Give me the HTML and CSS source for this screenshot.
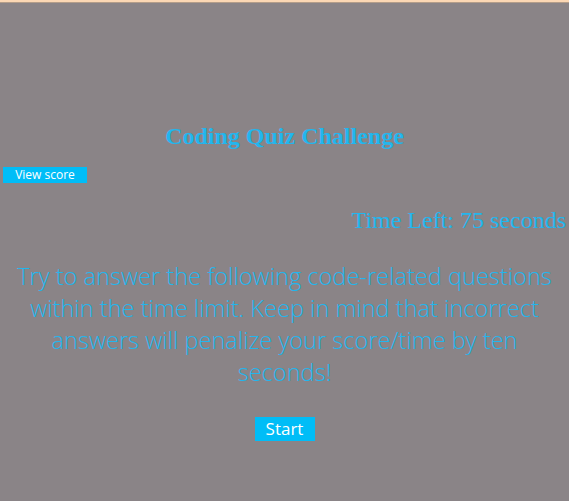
FILE: index.html
```html
<!DOCTYPE html>
<html>
<head>
<meta charset="utf-8">
<link rel="stylesheet" href="styles.css">
</head>
<body>
<div class="topbar"></div>
<main class="page">
  <h1 class="title">Coding Quiz Challenge</h1>
  <div class="score-row"><button class="score-btn">View score</button></div>
  <div class="timer">Time Left: 75 seconds</div>
  <p class="intro">Try to answer the following code-related questions within the time limit. Keep in mind that incorrect answers will penalize your score/time by ten seconds!</p>
  <div class="start-row"><button class="start-btn">Start</button></div>
</main>
</body>
</html>
```
FILE: styles.css
```css
html, body {
  margin: 0;
  padding: 0;
  background: #8a8487;
  height: 100%;
}
body {
  font-family: "Open Sans", "Liberation Sans", sans-serif;
  color: #22b6ee;
}
.topbar {
  height: 2px;
  background: #fbd7b4;
  border-bottom: 1px solid #b39d8a;
}
.page {
  padding: 0 3px;
}
.title {
  margin: 120px 0 0;
  font-family: "Liberation Serif", serif;
  font-weight: bold;
  font-size: 24px;
  line-height: 26px;
  text-align: center;
}
.score-row {
  margin-top: 18px;
  display: flex;
}
.score-btn {
  width: 84px;
  height: 16px;
  padding: 0;
  border: none;
  background: #00bdf7;
  color: #fff;
  font-family: "Open Sans", sans-serif;
  font-size: 12px;
  line-height: 16px;
}
.timer {
  margin-top: 22px;
  text-align: right;
  font-family: "Liberation Serif", serif;
  font-size: 24px;
  line-height: 30px;
}
.intro {
  margin: 25px 8px 0;
  text-align: center;
  font-weight: 300;
  font-size: 23.6px;
  line-height: 32px;
}
.start-row {
  margin-top: 29px;
  display: flex;
  justify-content: center;
}
.start-btn {
  width: 60px;
  height: 24px;
  padding: 0;
  border: none;
  background: #00bdf7;
  color: #fff;
  font-family: "Open Sans", sans-serif;
  font-size: 17px;
  line-height: 24px;
}
```
